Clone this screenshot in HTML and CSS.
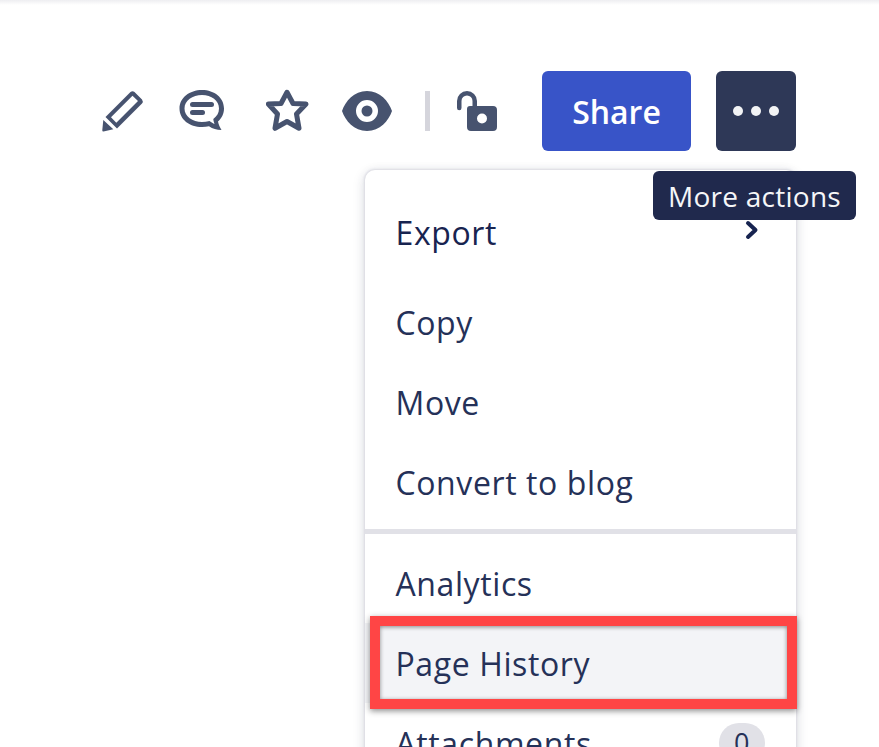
FILE: index.html
```html
<!DOCTYPE html>
<html lang="en">
<head>
<meta charset="utf-8">
<title>Page actions</title>
<link rel="stylesheet" href="styles.css">
</head>
<body>
<div class="topbar"></div>
<div class="toolbar">
  <svg class="ic ic-pencil" viewBox="0 0 42 42"><path d="M1.300 30 L11.300 39.300 L1.500 41.500 Q0 41.500 0.300 40 Z"/><path d="M3.500 27 L28.500 2 Q30.500 0.300 32.500 2 L40 9.500 Q41.500 11.500 40 13.500 L15 38.500 Z M9 27.300 L14.300 32.800 L36 11 L30.500 5.700 Z" fill-rule="evenodd"/></svg>
  <svg class="ic ic-comment" viewBox="0 0 46 42"><path d="M23 0 C35.500 0 45 7.800 45 18.500 C45 24 42.800 28 39 31.500 C39.500 34.500 41 37.500 42.500 40 C37.500 40 33.800 38.800 30 36.300 C27.800 36.800 25.500 37 23 37 C10.500 37 0.500 29.500 0.500 18.500 C0.500 7.800 10.500 0 23 0 Z M23 5 C13.500 5 5.500 10.500 5.500 18.500 C5.500 26.500 13.500 32 23 32 C25.500 32 28 31.700 30.500 31 C32.500 32.500 34 33.300 35.500 34 C35 32.500 34.500 31 34.300 29 C37.800 26.300 40 23 40 18.500 C40 10.500 32.500 5 23 5 Z" fill-rule="evenodd"/><rect x="11" y="12" width="24" height="5" rx="2.500"/><rect x="11" y="20" width="15" height="5" rx="2.500"/></svg>
  <svg class="ic ic-star" viewBox="0 0 44 44"><path d="M21 3.300 L27 14.500 L40 15 L30.500 25 L33 39.300 L21 32.500 L9 39.300 L11.500 25 L2.300 15 L15 14.500 Z" fill="none" stroke="#47536f" stroke-width="5" stroke-linejoin="round"/></svg>
  <svg class="ic ic-eye" viewBox="0 0 50 40"><path d="M25 0 C38 0 46.500 10 50 20 C46.500 30 38 40 25 40 C12 40 3.500 30 0 20 C3.500 10 12 0 25 0 Z M25 9 A11 11 0 1 0 25 31 A11 11 0 1 0 25 9 Z" fill-rule="evenodd"/><circle cx="25" cy="20" r="5.500"/></svg>
  <span class="sep"></span>
  <svg class="ic ic-lock" viewBox="0 0 40 40"><path d="M0 17 L0 10 A10 10 0 0 1 20 10 L20 16 L15.500 16 L15.500 10 A5.500 5.500 0 0 0 4.500 10 L4.500 17 A2.250 2.250 0 0 1 0 17 Z"/><path d="M13 15 H36 Q40 15 40 19 V36 Q40 40 36 40 H14 Q10 40 10 36 V18 Q10 15 13 15 Z M25 22.500 A5 5 0 1 0 25 32.500 A5 5 0 1 0 25 22.500 Z" fill-rule="evenodd"/></svg>
  <button class="btn btn-share">Share</button>
  <button class="btn btn-more"><span class="dot"></span><span class="dot"></span><span class="dot"></span></button>
</div>
<div class="tooltip">More actions</div>
<div class="menu">
  <div class="section section-first">
    <div class="item">Export
      <svg class="chev" viewBox="0 0 14 20"><path d="M3 3 L10.500 10 L3 17" fill="none" stroke="#172450" stroke-width="4" stroke-linecap="round" stroke-linejoin="round"/></svg>
    </div>
  </div>
  <div class="section">
    <div class="item">Copy</div>
    <div class="item">Move</div>
    <div class="item">Convert to blog</div>
  </div>
  <div class="section section-rule">
    <div class="item">Analytics</div>
    <div class="item item-active">Page History</div>
    <div class="item">Attachments <span class="badge">0</span></div>
  </div>
</div>
<div class="annotation"></div>
</body>
</html>
```

FILE: styles.css
```css
* { box-sizing: border-box; }
html, body { margin: 0; height: 100%; }
body {
  position: relative;
  overflow: hidden;
  background: #fff;
  font-family: "Open Sans", "Noto Sans", sans-serif;
  color: #253158;
}
.topbar {
  height: 5px;
  background: linear-gradient(#eeeef1, #fff);
}
.toolbar {
  display: flex;
  align-items: center;
  justify-content: flex-end;
  height: 80px;
  margin-top: 66px;
  padding-right: 83px;
}
.ic { display: block; fill: #47536f; flex: none; }
.ic-pencil { width: 42px; height: 42px; margin-right: 35px; }
.ic-comment { width: 46px; height: 42px; margin-right: 41px; }
.ic-star { width: 44px; height: 44px; margin-right: 32px; }
.ic-eye { width: 50px; height: 40px; margin-right: 33px; }
.sep { width: 5px; height: 40px; background: #d5d5dc; margin-right: 27px; }
.ic-lock { width: 40px; height: 40px; margin-right: 45px; }
.btn {
  display: flex;
  align-items: center;
  justify-content: center;
  height: 80px;
  border: 0;
  border-radius: 6px;
  font-family: inherit;
}
.btn-share {
  width: 149px;
  margin-right: 25px;
  background: #3854c8;
  color: #fff;
  font-size: 32px;
  font-weight: 600;
}
.btn-more { width: 80px; gap: 8px; background: #2e3857; }
.dot { width: 10px; height: 10px; border-radius: 50%; background: #f2f3f5; }
.tooltip {
  position: absolute;
  z-index: 3;
  left: 653px;
  top: 171px;
  width: 203px;
  height: 49px;
  border-radius: 6px;
  background: #20294d;
  color: #f5f6f8;
  font-size: 28px;
  letter-spacing: 0.25px;
  line-height: 50px;
  text-align: center;
}
.menu {
  position: absolute;
  z-index: 1;
  left: 365px;
  top: 170px;
  width: 431px;
  height: 640px;
  background: #fff;
  border-radius: 10px 10px 0 0;
  box-shadow: 0 0 2px 1px #dcdce3, -2px 2px 12px rgba(40, 45, 80, 0.1), 2px 2px 12px rgba(40, 45, 80, 0.1);
  font-size: 32px;
  letter-spacing: 0.6px;
}
.section { padding-top: 10px; }
.section-first { padding-top: 22px; }
.section-rule {
  margin-top: 7px;
  padding-top: 9px;
  border-top: 5px solid #e1e1e7;
}
.item {
  position: relative;
  display: flex;
  align-items: center;
  justify-content: space-between;
  height: 80px;
  padding: 0 31px 0 30.5px;
}
.section-first .item { color: #182450; }
.item-active { background: #f3f4f7; }
.chev { width: 14px; height: 20px; margin: 0 6px 4px 0; }
.badge {
  display: block;
  width: 46px;
  height: 40px;
  border-radius: 20px;
  background: #e1e1e7;
  font-size: 27px;
  line-height: 40px;
  text-align: center;
}
.annotation {
  position: absolute;
  z-index: 2;
  left: 370px;
  top: 616px;
  width: 427px;
  height: 93px;
  border: 10px solid #ff4545;
  box-shadow: 0 2px 6px rgba(0, 0, 0, 0.45), inset 0 1px 4px rgba(0, 0, 0, 0.45);
}
```
